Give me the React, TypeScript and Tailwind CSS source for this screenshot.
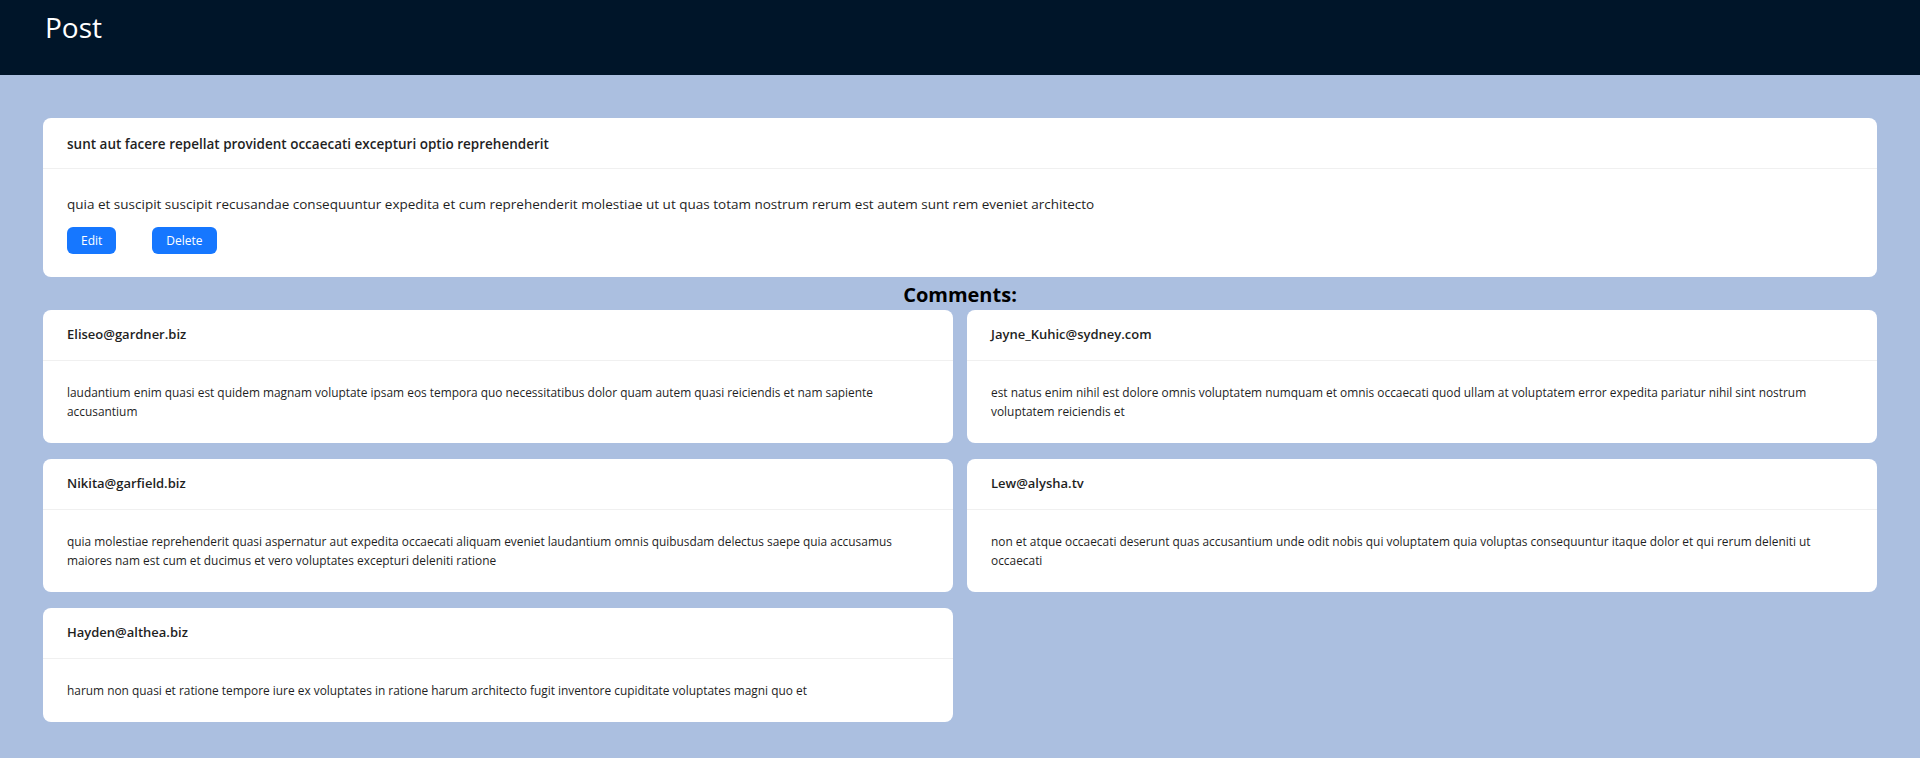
import React from "react";

interface CommentProps {
    email: string;
    body: string;
}

const comments: CommentProps[] = [
    {
        email: "Eliseo@gardner.biz",
        body: "laudantium enim quasi est quidem magnam voluptate ipsam eos tempora quo necessitatibus dolor quam autem quasi reiciendis et nam sapiente accusantium",
    },
    {
        email: "Jayne_Kuhic@sydney.com",
        body: "est natus enim nihil est dolore omnis voluptatem numquam et omnis occaecati quod ullam at voluptatem error expedita pariatur nihil sint nostrum voluptatem reiciendis et",
    },
    {
        email: "Nikita@garfield.biz",
        body: "quia molestiae reprehenderit quasi aspernatur aut expedita occaecati aliquam eveniet laudantium omnis quibusdam delectus saepe quia accusamus maiores nam est cum et ducimus et vero voluptates excepturi deleniti ratione",
    },
    {
        email: "Lew@alysha.tv",
        body: "non et atque occaecati deserunt quas accusantium unde odit nobis qui voluptatem quia voluptas consequuntur itaque dolor et qui rerum deleniti ut occaecati",
    },
    {
        email: "Hayden@althea.biz",
        body: "harum non quasi et ratione tempore iure ex voluptates in ratione harum architecto fugit inventore cupiditate voluptates magni quo et",
    },
];

function CommentCard(props: CommentProps) {
    return (
        <div className="bg-white rounded-lg">
            <div className="h-[51px] flex items-center px-6 border-b border-[#f0f0f0] text-[13px] font-semibold text-[#1f1f1f]">
                {props.email}
            </div>
            <div className="px-6 pt-[22px] pb-[22px] text-[11.9px] leading-[19px] text-[#1f1f1f]">
                {props.body}
            </div>
        </div>
    );
}

export default function App() {
    return (
        <div
            className="min-h-screen bg-[#abbfe0]"
            style={{ fontFamily: '"Open Sans", "Noto Sans", sans-serif' }}
        >
            <header className="h-[75px] bg-[#001529] px-[45px] pt-[13px]">
                <h1 className="text-[28px] leading-[28px] text-white">Post</h1>
            </header>

            <main className="px-[43px] pt-[43px] pb-[43px]">
                {/* Post card */}
                <div className="bg-white rounded-lg">
                    <div className="h-[51px] flex items-center px-6 pt-[2px] border-b border-[#f0f0f0] text-[13.5px] font-semibold text-[#1f1f1f]">
                        sunt aut facere repellat provident occaecati excepturi optio reprehenderit
                    </div>
                    <div className="px-6 pt-6 pb-[23px]">
                        <p className="text-[13.5px] leading-[22px] text-[#1f1f1f]">
                            quia et suscipit suscipit recusandae consequuntur expedita et cum reprehenderit molestiae ut ut quas totam nostrum rerum est autem sunt rem eveniet architecto
                        </p>
                        <div className="flex gap-[36px] mt-[12px]">
                            <button className="h-[27px] px-[14px] rounded-[6px] bg-[#1677ff] text-white text-[12px]">
                                Edit
                            </button>
                            <button className="h-[27px] px-[14px] rounded-[6px] bg-[#1677ff] text-white text-[12px]">
                                Delete
                            </button>
                        </div>
                    </div>
                </div>

                <h2 className="text-center text-[20px] leading-[31px] font-bold text-black pt-[2px]">
                    Comments:
                </h2>

                <div className="grid grid-cols-2 gap-x-[14px] gap-y-4">
                    {comments.map((c) => (
                        <CommentCard key={c.email} email={c.email} body={c.body} />
                    ))}
                </div>
            </main>
        </div>
    );
}
